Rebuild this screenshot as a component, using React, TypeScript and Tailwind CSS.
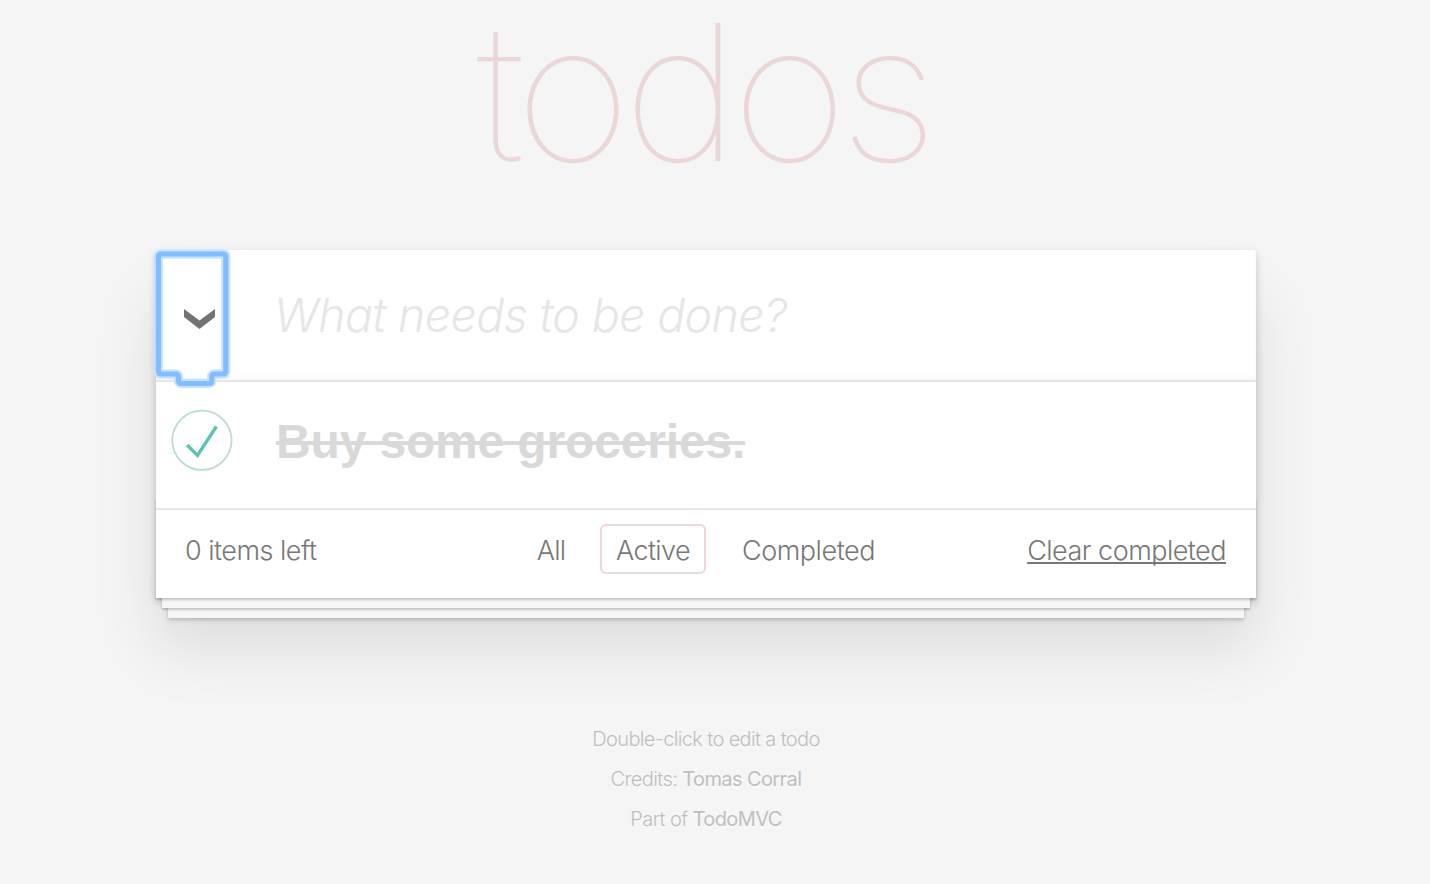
const filters = [
  { label: 'All', box: 'w-[56px] border-transparent', tracking: 'tracking-[-0.8px]' },
  { label: 'Active', box: 'w-[106px] border-[#efd5d5]', tracking: 'tracking-[-0.6px]' },
  { label: 'Completed', box: 'w-[163px] border-transparent', tracking: 'tracking-[-0.45px]' },
];

function FocusRing() {
  const outline =
    'M161 254H223Q225.8 254 225.8 257V371Q225.8 374 223 374H215Q211.7 374 211.7 377V380.5Q211.7 383.5 208.7 383.5H181.5Q178.5 383.5 178.5 380.5V377Q178.5 374 175.5 374H161Q158.4 374 158.4 371V257Q158.4 254 161 254Z';
  return (
    <svg className="pointer-events-none absolute -left-1 -top-1" width="80" height="144" viewBox="152 246 80 144" fill="none">
      <path d={outline} stroke="#c9e2ff" strokeWidth="9.4" strokeLinejoin="round" />
      <path d={outline} stroke="#82beff" strokeWidth="5.2" strokeLinejoin="round" />
    </svg>
  );
}

export default function App() {
  return (
    <div className="h-[884px] bg-[#f5f5f5] pl-[156px] font-['Inter','Liberation_Sans',sans-serif] font-light">
      <div className="w-[1100px]">
        <h1 className="flex h-[250px] justify-center whitespace-nowrap pr-[6px] text-[190px] leading-[184px] font-thin tracking-[-8.2px] text-[#ead7d7]">
          <span className="scale-x-[1.06]">todos</span>
        </h1>
        <section className="relative h-[348px] bg-white shadow-[0_4px_8px_rgba(0,0,0,0.2),0_50px_60px_rgba(0,0,0,0.1)]">
          <div className="relative z-10 flex h-[130px] items-center shadow-[inset_0_-3px_4px_rgba(0,0,0,0.03)]">
            <button aria-label="Mark all as complete" className="flex w-[120px] pl-[28px] pt-[8px]">
              <svg width="31" height="20" viewBox="0 0 31 20" fill="#737373">
                <path d="M0 0 15.5 11.5 31 0V8L15.5 20 0 8Z" />
              </svg>
            </button>
            <span className="-ml-[2px] whitespace-nowrap text-[46.5px] leading-[58px] italic tracking-[-0.65px] text-[#e6e6e6]">What needs to be done?</span>
            <FocusRing />
          </div>
          <div className="flex h-[128px] border-t-2 border-[#e6e6e6] pt-[18px]">
            <svg className="shrink-0 overflow-visible" width="80" height="80" viewBox="-10 -18 100 135" fill="none">
              <circle cx="50" cy="50" r="50" stroke="#bddad5" strokeWidth="3" />
              <path fill="#5dc2af" d="M72 25L42 71 27 56l-4 4 20 20 34-52z" />
            </svg>
            <span className="ml-[40px] mt-[13px] whitespace-nowrap font-['Liberation_Sans',Arial,sans-serif] text-[48px] leading-[58px] font-bold tracking-[-0.16px] text-[#d9d9d9] line-through">Buy some groceries.</span>
          </div>
          <footer className="relative flex h-[90px] border-t-2 border-[#e6e6e6] text-[27px] leading-[36px] text-[#777]">
            <div className="pointer-events-none absolute inset-x-0 bottom-0 h-[100px] shadow-[0_2px_2px_rgba(0,0,0,0.2),0_16px_0_-6px_#f6f6f6,0_18px_2px_-6px_rgba(0,0,0,0.2),0_32px_0_-12px_#f6f6f6,0_34px_4px_-12px_rgba(0,0,0,0.2)]" />
            <span className="w-[337px] whitespace-nowrap pl-[29px] pt-[23px] tracking-[-0.52px]">0 items left</span>
            <nav className="mt-[14px] ml-[30px] flex gap-[21px]">
              {filters.map((f) => (
                <a key={f.label} className={`flex h-[50px] items-center justify-center whitespace-nowrap rounded-[6px] border-2 pt-[4px] ${f.box} ${f.tracking}`}>{f.label}</a>
              ))}
            </nav>
            <button className="ml-auto mr-[30px] mt-[23px] h-[36px] whitespace-nowrap tracking-[-0.52px] underline decoration-2 underline-offset-2 [text-decoration-skip-ink:none]">Clear completed</button>
          </footer>
        </section>
        <footer className="mt-[120px] flex flex-col items-center gap-[16px] text-[20px] leading-[24px] text-[#bfbfbf] [text-shadow:0_2px_0_rgba(255,255,255,0.5)]">
          <p className="mt-[9px] whitespace-nowrap tracking-[-0.64px]">Double-click to edit a todo</p>
          <p className="whitespace-nowrap tracking-[-0.6px]">Credits: <a className="font-normal">Tomas Corral</a></p>
          <p className="whitespace-nowrap tracking-[-0.6px]">Part of <a className="font-normal">TodoMVC</a></p>
        </footer>
      </div>
    </div>
  );
}
